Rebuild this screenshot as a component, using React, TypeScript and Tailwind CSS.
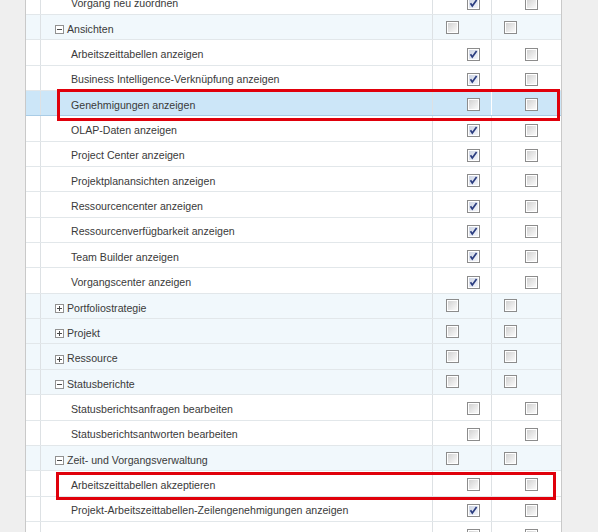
import React from "react";

type Row = {
  label: string;
  kind: "group" | "child";
  expanded?: boolean;
  c1: boolean;
  c2: boolean;
  selected?: boolean;
};

const rows: Row[] = [
  { label: "Vorgang neu zuordnen", kind: "child", c1: true, c2: false },
  { label: "Ansichten", kind: "group", expanded: true, c1: false, c2: false },
  { label: "Arbeitszeittabellen anzeigen", kind: "child", c1: true, c2: false },
  { label: "Business Intelligence-Verknüpfung anzeigen", kind: "child", c1: true, c2: false },
  { label: "Genehmigungen anzeigen", kind: "child", c1: false, c2: false, selected: true },
  { label: "OLAP-Daten anzeigen", kind: "child", c1: true, c2: false },
  { label: "Project Center anzeigen", kind: "child", c1: true, c2: false },
  { label: "Projektplanansichten anzeigen", kind: "child", c1: true, c2: false },
  { label: "Ressourcencenter anzeigen", kind: "child", c1: true, c2: false },
  { label: "Ressourcenverfügbarkeit anzeigen", kind: "child", c1: true, c2: false },
  { label: "Team Builder anzeigen", kind: "child", c1: true, c2: false },
  { label: "Vorgangscenter anzeigen", kind: "child", c1: true, c2: false },
  { label: "Portfoliostrategie", kind: "group", expanded: false, c1: false, c2: false },
  { label: "Projekt", kind: "group", expanded: false, c1: false, c2: false },
  { label: "Ressource", kind: "group", expanded: false, c1: false, c2: false },
  { label: "Statusberichte", kind: "group", expanded: true, c1: false, c2: false },
  { label: "Statusberichtsanfragen bearbeiten", kind: "child", c1: false, c2: false },
  { label: "Statusberichtsantworten bearbeiten", kind: "child", c1: false, c2: false },
  { label: "Zeit- und Vorgangsverwaltung", kind: "group", expanded: true, c1: false, c2: false },
  { label: "Arbeitszeittabellen akzeptieren", kind: "child", c1: false, c2: false },
  { label: "Projekt-Arbeitszeittabellen-Zeilengenehmigungen anzeigen", kind: "child", c1: true, c2: false },
  { label: "Vorgänge anzeigen", kind: "child", c1: false, c2: false },
];

function Checkbox({ checked }: { checked: boolean }) {
  return (
    <svg width="13" height="13" viewBox="0 0 13 13" className="block">
      <defs>
        <linearGradient id="cbg" x1="0" y1="0" x2="1" y2="1">
          <stop offset="0" stopColor="#d2d2d2" />
          <stop offset="1" stopColor="#fafafa" />
        </linearGradient>
        <linearGradient id="cbgc" x1="0" y1="0" x2="1" y2="1">
          <stop offset="0" stopColor="#cdd4e3" />
          <stop offset="1" stopColor="#f4f6fb" />
        </linearGradient>
      </defs>
      <rect x="0.5" y="0.5" width="12" height="12" fill="#fff" stroke="#8c8c8c" />
      <rect x="2" y="2" width="9" height="9" fill={checked ? "url(#cbgc)" : "url(#cbg)"} />
      {checked && (
        <path d="M3.5 6.2 L5.3 9 L9.6 3" fill="none" stroke="#2b3d80" strokeWidth="1.7" />
      )}
    </svg>
  );
}

function Expander({ expanded }: { expanded: boolean }) {
  return (
    <svg width="9" height="9" viewBox="0 0 9 9" className="block">
      <rect x="0.5" y="0.5" width="8" height="8" fill="#fff" stroke="#919191" />
      <path d="M2 4.5 H7" stroke="#4a4a4a" strokeWidth="1" />
      {!expanded && <path d="M4.5 2 V7" stroke="#4a4a4a" strokeWidth="1" />}
    </svg>
  );
}

export default function App() {
  return (
    <div
      className="relative flex w-[598px] h-[532px] overflow-hidden bg-[#f0f0f0]"
      style={{ fontFamily: '"Liberation Sans", Arial, sans-serif' }}
    >
      <div className="w-[25px] shrink-0 bg-[#efefef]" />
      <div className="w-[537px] shrink-0 bg-white border-l border-r border-[#c9c9c9]">
        <div className="-mt-[10.35px]">
          {rows.map((r, i) => {
            const isGroup = r.kind === "group";
            const bg = r.selected ? "bg-[#cce6f8]" : isGroup ? "bg-[#f1f8fc]" : "bg-white";
            const border = r.selected ? "border-[#a9cce6]" : "border-[#e2e7ea]";
            return (
              <div key={i} className={`flex h-[25.35px] border-b ${border} ${bg}`}>
                <div className="w-[15px] shrink-0 border-r border-[#dde1e4]" />
                <div className="w-[392px] shrink-0 flex items-center pt-[5px] border-r border-[#dde1e4] text-[10.6px] text-[#3a3a3a] whitespace-nowrap">
                  {isGroup ? (
                    <div className="flex items-center pl-[14px] gap-[3px]">
                      <Expander expanded={!!r.expanded} />
                      <span>{r.label}</span>
                    </div>
                  ) : (
                    <span className="pl-[30px]">{r.label}</span>
                  )}
                </div>
                <div
                  className={`w-[59px] shrink-0 flex items-center border-r ${
                    r.selected ? "border-white" : "border-[#dde1e4]"
                  } ${isGroup ? "pl-[13px]" : "pl-[34px] pt-[3px]"}`}
                >
                  <Checkbox checked={r.c1} />
                </div>
                <div className={`flex-1 flex items-center ${isGroup ? "pl-[12px]" : "pl-[33px] pt-[3px]"}`}>
                  <Checkbox checked={r.c2} />
                </div>
              </div>
            );
          })}
        </div>
      </div>
      <div className="flex-1 bg-[#efefef]" />

      <div className="absolute left-[57px] top-[89px] w-[503px] h-[32px] border-[3px] border-[#e0000b] pointer-events-none" />
      <div className="absolute left-[56px] top-[472px] w-[500px] h-[28px] border-[3px] border-[#e0000b] pointer-events-none" />
    </div>
  );
}
